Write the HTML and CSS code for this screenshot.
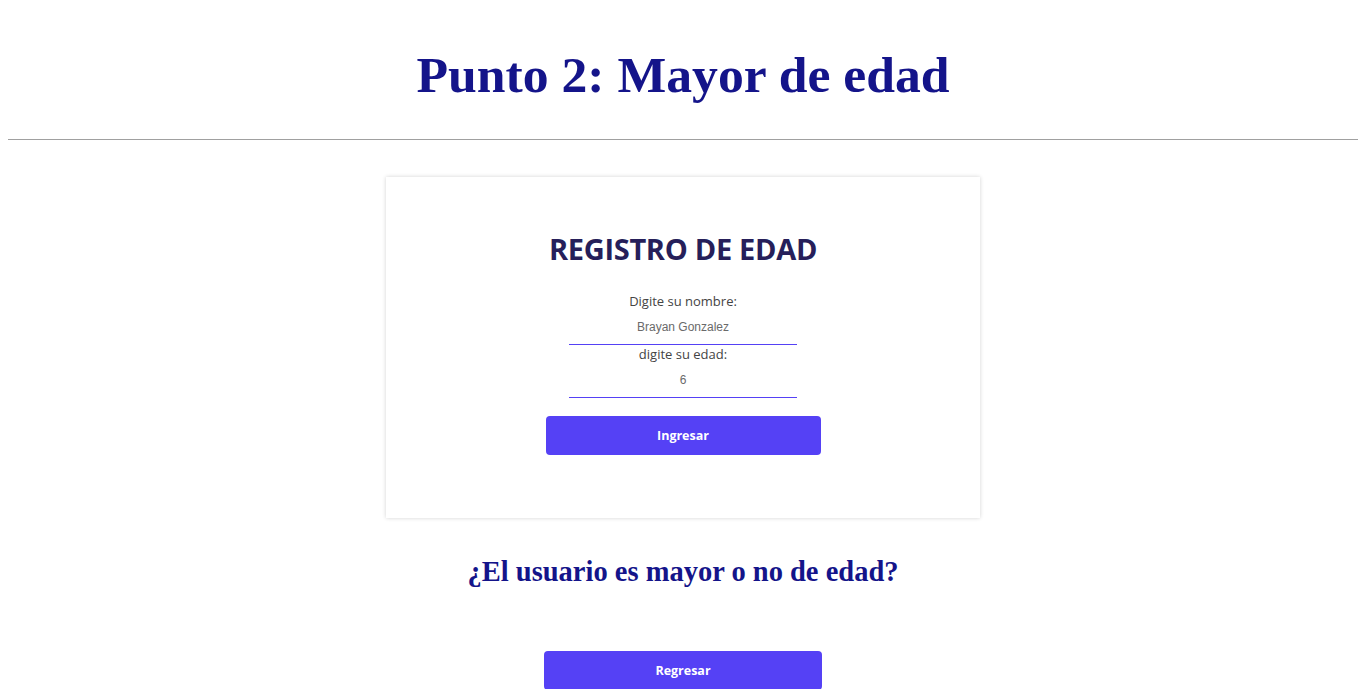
FILE: index.html
```html
<!DOCTYPE html>
<html lang="es">
<head>
<meta charset="utf-8">
<title>Punto 2</title>
<link rel="stylesheet" href="styles.css">
</head>
<body>
<h1 class="title">Punto 2: Mayor de edad</h1>
<hr class="divider">
<main class="content">
  <form class="card">
    <h2 class="card-title">REGISTRO DE EDAD</h2>
    <label class="label" for="nombre">Digite su nombre:</label>
    <input class="field" id="nombre" type="text" value="Brayan Gonzalez">
    <label class="label" for="edad">digite su edad:</label>
    <input class="field" id="edad" type="text" value="6">
    <button class="btn btn-submit" type="button">Ingresar</button>
  </form>
  <h2 class="result">¿El usuario es mayor o no de edad?</h2>
  <button class="btn btn-back" type="button">Regresar</button>
</main>
</body>
</html>
```
FILE: styles.css
```css
body {
  margin: 8px;
  font-family: "Liberation Serif", "Times New Roman", serif;
  background: #fff;
}
.title {
  margin: 37px 0 0;
  text-align: center;
  font-size: 51.7px;
  line-height: 60px;
  font-weight: bold;
  color: #14148a;
}
.divider {
  margin: 34px 0 0;
  border: 0;
  border-top: 1px solid #a0a0a0;
  height: 0;
}
.content {
  display: flex;
  flex-direction: column;
  align-items: center;
}
.card {
  margin-top: 37px;
  width: 594px;
  height: 341px;
  box-sizing: border-box;
  background: #fff;
  box-shadow: 0 0 4px rgba(0, 0, 0, 0.18);
  display: flex;
  flex-direction: column;
  align-items: center;
  padding-top: 56px;
}
.card-title {
  margin: 0 0 27px;
  font-family: "Open Sans", "Noto Sans", sans-serif;
  font-weight: 700;
  font-size: 29px;
  line-height: 32px;
  color: #261f5a;
  letter-spacing: -0.3px;
}
.label {
  font-family: "Open Sans", "Noto Sans", sans-serif;
  font-size: 13px;
  line-height: 18px;
  color: #444;
}
.field {
  width: 228px;
  box-sizing: border-box;
  height: 35px;
  border: 0;
  border-bottom: 1px solid #5541f5;
  text-align: center;
  font-family: "Liberation Sans", Arial, sans-serif;
  font-size: 12px;
  color: #6a6a6a;
  outline: none;
  padding: 0;
}
.btn {
  border: 0;
  border-radius: 4px;
  background: #5541f5;
  color: #fff;
  font-family: "Open Sans", "Noto Sans", sans-serif;
  font-weight: 700;
  font-size: 12.5px;
  cursor: pointer;
}
.btn-submit {
  margin-top: 18px;
  width: 275px;
  height: 39px;
}
.result {
  margin: 38px 0 0;
  font-size: 28.5px;
  line-height: 32px;
  font-weight: bold;
  color: #14148a;
  text-align: center;
}
.btn-back {
  margin-top: 63px;
  width: 278px;
  height: 39px;
}
```
